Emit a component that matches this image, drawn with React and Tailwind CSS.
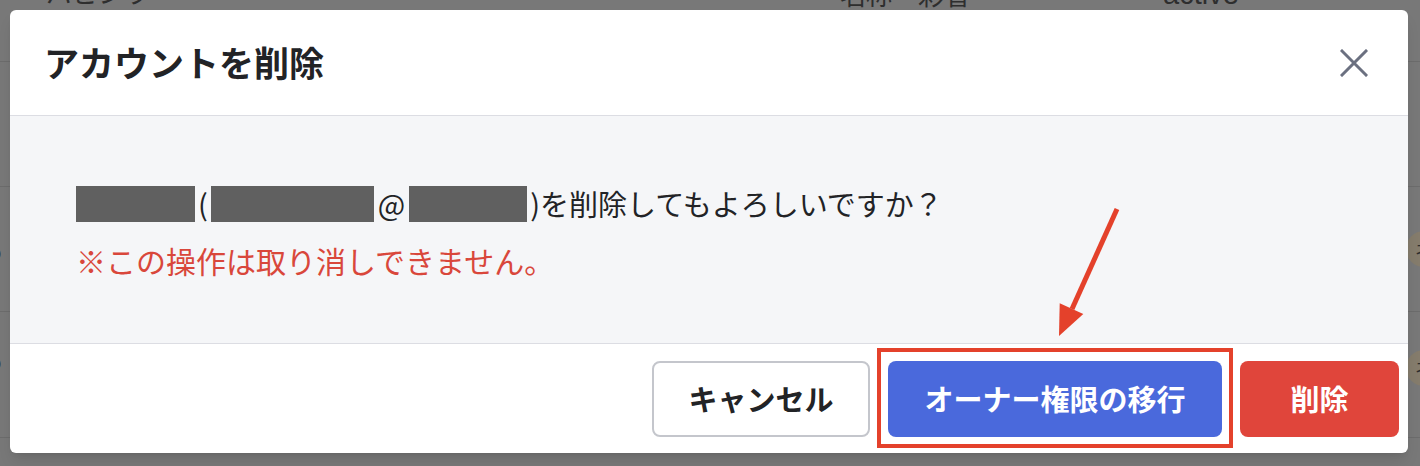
import React from "react";

// dimmed page that sits behind the dialog
const BackdropTable = () => {
  return (
    <div className="flex flex-col text-[#2e2e2e]">
      <div className="flex h-[62px] border-b border-[#6c6c6c] text-[26px] leading-none">
        <span className="-mt-[21px] ml-[46px]">パピシラ</span>
        <span className="-mt-[19px] ml-[690px]">名称　彩省</span>
        <span className="-mt-[20px] ml-[193px] font-['Liberation_Sans',sans-serif] text-[29px]">active</span>
      </div>
      <div className="h-[125px] border-b border-[#6c6c6c]"></div>
      <div className="flex h-[125px] items-center justify-between border-b border-[#6c6c6c] text-[26px]">
        <span className="-ml-[14px]">o</span>
        <span className="-mr-[22px] flex h-[36px] w-[36px] items-center justify-center rounded-full bg-[#857c6c] text-[18px]">ネ</span>
      </div>
      <div className="flex h-[126px] items-center justify-between border-b border-[#6c6c6c] text-[26px]">
        <span className="-ml-[14px] -mt-[30px]">o</span>
        <span className="-mr-[22px] -mt-[14px] flex h-[36px] w-[36px] items-center justify-center rounded-full bg-[#857c6c] text-[18px]">ネ</span>
      </div>
    </div>
  );
};

const CloseIcon = () => (
  <svg width="28" height="28" viewBox="0 0 28 28" fill="none" stroke="#6b7080" strokeWidth="3" strokeLinecap="square">
    <path d="M2 2L26 26M26 2L2 26" />
  </svg>
);

const Redacted = ({ w }) => (
  <span className="inline-block h-[36px] bg-[#606060]" style={{ width: w }}></span>
);

const DeleteAccountModal = () => {
  return (
    <div className="absolute left-[10px] top-[10px] flex h-[443px] w-[1398px] flex-col overflow-hidden rounded-[6px] bg-white shadow-lg">
      <header className="flex h-[106px] shrink-0 items-center justify-between border-b border-[#dcdde3] pl-[34px] pr-[40px]">
        <h2 className="text-[35px] font-bold text-[#222326]">アカウントを削除</h2>
        <button className="flex items-center">
          <CloseIcon />
        </button>
      </header>

      <div className="flex flex-1 flex-col bg-[#f5f6f8] pl-[66px] pt-[60px]">
        <p className="flex h-[56px] items-center text-[29px] text-[#222326]">
          <Redacted w={119} />
          <span className="mx-[3px]">(</span>
          <Redacted w={163} />
          <span className="mx-[4px]">@</span>
          <Redacted w={118} />
          <span className="ml-[3px]">)を削除してもよろしいですか？</span>
        </p>
        <p className="flex h-[56px] items-center text-[30px] text-[#d9473b]">※この操作は取り消しできません。</p>
      </div>

      <footer className="flex h-[110px] shrink-0 items-start justify-end gap-[18px] border-t border-[#dcdde3] pr-[9px] pt-[17px]">
        <button className="h-[76px] w-[218px] rounded-[8px] border-2 border-[#c4c6cc] bg-white text-[29px] font-bold text-[#222326]">
          キャンセル
        </button>
        <button className="h-[76px] w-[334px] rounded-[8px] bg-[#4a69dc] text-[29px] font-bold text-white">
          オーナー権限の移行
        </button>
        <button className="h-[76px] w-[159px] rounded-[8px] bg-[#e0453b] text-[29px] font-bold text-white">
          削除
        </button>
      </footer>
    </div>
  );
};

export default function App() {
  return (
    <div className="relative h-[466px] w-full overflow-hidden bg-[#787878] font-['Noto_Sans_CJK_JP',sans-serif]">
      <BackdropTable />
      <DeleteAccountModal />

      {/* callout pointing at the transfer button */}
      <div className="absolute left-[877px] top-[348px] h-[100px] w-[356px] border-4 border-[#e4412b]"></div>
      <svg className="absolute left-[1040px] top-[200px]" width="100" height="145" viewBox="0 0 100 145">
        <line x1="77" y1="9" x2="32" y2="109" stroke="#e4412b" strokeWidth="5" />
        <polygon points="19,136 19.7,103.3 43.3,114.1" fill="#e4412b" />
      </svg>
    </div>
  );
}
